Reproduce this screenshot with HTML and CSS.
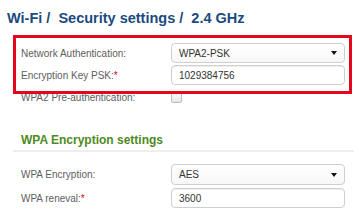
FILE: index.html
```html
<!DOCTYPE html>
<html>
<head>
  <title>Wi-Fi Security settings</title>
  <link rel="stylesheet" href="styles.css">
</head>
<body>
  <div class="page">
    <h1 class="title">Wi-Fi /&nbsp; Security settings /&nbsp; 2.4 GHz</h1>

    <!-- основные настройки -->
    <div class="form form-main">
      <div class="row">
        <label>Network Authentication:</label>
        <div class="select">
          <span>WPA2-PSK</span>
          <svg class="arrow" width="6" height="4" viewBox="0 0 6 4"><path d="M0 0h6L3 4z" fill="#111"/></svg>
        </div>
      </div>
      <div class="row">
        <label>Encryption Key PSK:<span class="req">*</span></label>
        <div class="input">1029384756</div>
      </div>
      <div class="row">
        <label>WPA2 Pre-authentication:</label>
        <span class="checkbox"></span>
      </div>
      <div class="highlight"></div>
    </div>

    <h2 class="section">WPA Encryption settings</h2>

    <div class="form form-wpa">
      <div class="row">
        <label>WPA Encryption:</label>
        <div class="select">
          <span>AES</span>
          <svg class="arrow" width="6" height="4" viewBox="0 0 6 4"><path d="M0 0h6L3 4z" fill="#111"/></svg>
        </div>
      </div>
      <div class="row">
        <label>WPA reneval:<span class="req">*</span></label>
        <div class="input">3600</div>
      </div>
    </div>
  </div>
</body>
</html>
```

FILE: styles.css
```css
/* общие стили */
body {
  margin: 0;
  background-color: #fff;
  font-family: "Liberation Sans", Arial, sans-serif;
  overflow: hidden;
}

.page {
  width: 354px;
}

.title {
  margin: 0;
  padding: 10px 0 0 7px;
  font-size: 14.5px;
  line-height: 16px;
  font-weight: bold;
  color: #1b4a7e;
}

/* формы */
.form {
  position: relative;
  display: grid;
  grid-template-columns: 150px 174px;
  padding-left: 21px;
}

.form-main {
  margin-top: 17px;
  row-gap: 2px;
}

.form-wpa {
  margin-top: 12px;
  row-gap: 3px;
}

.row {
  display: contents;
}

.row label {
  display: flex;
  align-items: center;
  height: 20px;
  font-size: 10px;
  color: #5e5e5e;
}

.form-wpa .row label {
  height: 21px;
}

.req {
  color: #d9001b;
}

.select,
.input {
  box-sizing: border-box;
  display: flex;
  align-items: center;
  height: 20px;
  padding: 0 7px 0 7px;
  border: 1px solid #cfcfcf;
  border-radius: 4px;
  background: linear-gradient(#fff, #f7f7f7);
  font-size: 10px;
  color: #333;
}

.form-wpa .select {
  height: 21px;
}

.select {
  justify-content: space-between;
}

.input {
  background: #fff;
  box-shadow: inset 0 1px 1px #eee;
}

.checkbox {
  align-self: center;
  box-sizing: border-box;
  width: 11px;
  height: 11px;
  border: 1px solid #bdbdbd;
  border-radius: 2px;
  background: linear-gradient(#fafafa, #e6e6e6);
}

/* красная рамка */
.highlight {
  position: absolute;
  left: 13px;
  top: -8px;
  width: 339px;
  height: 59px;
  box-sizing: border-box;
  border: 3px solid #e3061c;
}

.section {
  margin: 25px 0 0 13px;
  padding: 0 0 2px 8px;
  border-bottom: 2px solid #eeeeee;
  font-size: 12px;
  line-height: 16px;
  font-weight: bold;
  color: #4f8a1f;
}
```
